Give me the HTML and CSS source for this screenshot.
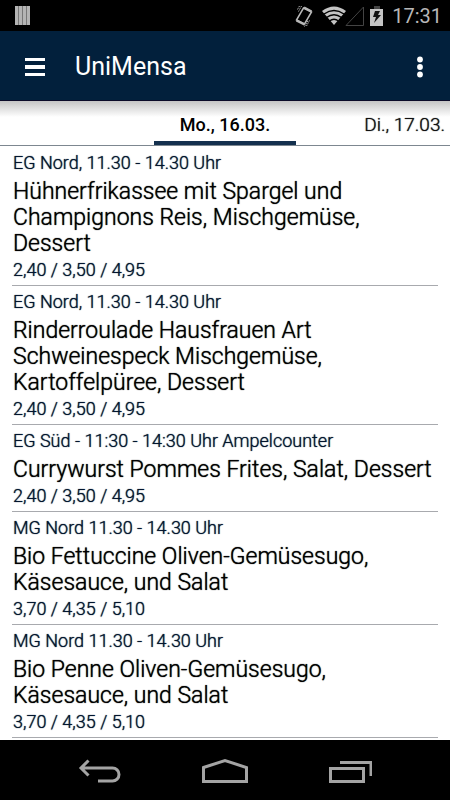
FILE: index.html
```html
<!DOCTYPE html>
<html lang="de">
<head>
<meta charset="utf-8">
<meta name="viewport" content="width=device-width, initial-scale=1">
<title>UniMensa</title>
<link rel="stylesheet" href="styles.css">
</head>
<body>
<div class="status-bar">
  <svg class="status-notification" width="15" height="19" viewBox="0 0 15 19" aria-hidden="true"><path fill="#b4b4b4" d="M0 0h15v19H0z"/><path stroke="#777" d="M3.500 0v19M7.500 0v19M11.500 0v19"/></svg>
  <div class="status-icons">
    <svg width="18" height="22" viewBox="0 0 18 22" fill="none" stroke="#b8b8b8" aria-hidden="true"><path stroke-width="1.500" d="M8.500 3L16.500 7 9.500 19 1.500 15z"/><path stroke-width="2.500" d="M1.500 15.500l8 4M9 2.500l7.500 4"/><path stroke-dasharray="1.500 1" d="M6.500 1L3.500 6.500M4.500 1L2.500 4.500M11.500 21L14.500 15.500M9.500 21.500l3.500-6"/></svg>
    <svg class="wifi" width="24" height="20" viewBox="0 0 24 20" aria-hidden="true"><path fill="#c4c4c4" d="M0 5Q12-4 24 5L12 19z"/><path fill="none" stroke="#000" stroke-width="1.500" d="M2 8Q12 1 22 8M4.500 11.500Q12 6 19.500 11.500M7.500 15Q12 11.500 16.500 15"/></svg>
    <svg class="signal" width="19" height="20" viewBox="0 0 19 20" aria-hidden="true"><path fill="none" stroke="#444" d="M1 19.500L18.500 1v18.500z"/></svg>
    <svg class="battery" width="14" height="20" viewBox="0 0 14 20" aria-hidden="true"><path fill="#444" d="M4 0h6v3H4z"/><path fill="#c4c4c4" d="M0 3h13v17H0z"/><path fill="#111" d="M5 5h5L8 9h3L4 17l2-6H3z"/></svg>
    <time class="clock">17:31</time>
  </div>
</div>
<header class="app-bar">
  <button class="icon-button" type="button" aria-label="Menü"><svg width="20" height="20" viewBox="0 0 20 20"><path fill="#fff" d="M0 1h20v3H0zM0 8h20v4H0zM0 16h20v3H0z"/></svg></button>
  <h1>UniMensa</h1>
  <button class="icon-button" type="button" aria-label="Weitere Optionen"><svg width="6" height="22" viewBox="0 0 6 22" fill="#fff"><circle cx="3" cy="3.500" r="2.900"/><circle cx="3" cy="11" r="2.900"/><circle cx="3" cy="18.500" r="2.900"/></svg></button>
</header>
<nav class="tabs" aria-label="Tage">
  <a class="tab tab-current" href="#mo" aria-current="page">Mo., 16.03.</a>
  <a class="tab tab-next" href="#di">Di., 17.03.</a>
</nav>
<main class="meals" id="mo">
  <article class="meal"><p class="detail">EG Nord, 11.30 - 14.30 Uhr</p><h2>Hühnerfrikassee mit Spargel und Champignons Reis, Mischgemüse, Dessert</h2><p class="detail">2,40 / 3,50 / 4,95</p></article>
  <article class="meal"><p class="detail">EG Nord, 11.30 - 14.30 Uhr</p><h2>Rinderroulade Hausfrauen Art Schweinespeck Mischgemüse, Kartoffelpüree, Dessert</h2><p class="detail">2,40 / 3,50 / 4,95</p></article>
  <article class="meal"><p class="detail">EG Süd - 11:30 - 14:30 Uhr Ampelcounter</p><h2>Currywurst Pommes Frites, Salat, Dessert</h2><p class="detail">2,40 / 3,50 / 4,95</p></article>
  <article class="meal"><p class="detail">MG Nord 11.30 - 14.30 Uhr</p><h2>Bio Fettuccine Oliven-Gemüsesugo, Käsesauce, und Salat</h2><p class="detail">3,70 / 4,35 / 5,10</p></article>
  <article class="meal"><p class="detail">MG Nord 11.30 - 14.30 Uhr</p><h2>Bio Penne Oliven-Gemüsesugo, Käsesauce, und Salat</h2><p class="detail">3,70 / 4,35 / 5,10</p></article>
</main>
<footer class="nav-bar">
  <button type="button" aria-label="Zurück"><svg width="44" height="26" viewBox="0 0 44 26" fill="none" stroke="#a4a4a4" stroke-width="3"><path d="M3 11h31.500a6.500 6.500 0 0 1 0 13H20M10.500 3.500L3 11l7.500 7.500"/></svg></button>
  <button type="button" aria-label="Startseite"><svg width="46" height="26" viewBox="0 0 46 26" fill="none" stroke="#a4a4a4" stroke-width="3"><path d="M1.500 10.500L23 3.500l21.500 7v14h-43z"/></svg></button>
  <button type="button" aria-label="Letzte Apps"><svg width="44" height="26" viewBox="0 0 44 26" fill="none" stroke="#a4a4a4" stroke-width="3"><path d="M2.500 11.500h33v13h-33zM12 5.500h31V19"/></svg></button>
</footer>
</body>
</html>
```
FILE: styles.css
```css
* { box-sizing: border-box; }
body {
  margin: 0;
  height: 100vh;
  display: flex;
  flex-direction: column;
  overflow: hidden;
  background: #fff;
  color: #000;
  font-family: Roboto, sans-serif;
}
h1, h2, p { margin: 0; font-weight: 400; }
button { border: 0; padding: 0; background: none; display: flex; align-items: center; justify-content: center; }
svg { display: block; flex: none; }
.status-bar {
  flex: none;
  height: 31px;
  padding: 0 8px 0 15px;
  display: flex;
  align-items: center;
  justify-content: space-between;
  background: #000;
}
.status-icons { display: flex; align-items: center; }
.wifi { margin-left: 9px; }
.signal { margin-left: -1px; }
.battery { margin-left: 6px; }
.clock { margin-left: 8px; color: #b8b8b8; font-size: 20px; line-height: 32px; }
.app-bar {
  flex: none;
  height: 70px;
  padding: 2px 10px 0 15px;
  display: flex;
  align-items: center;
  background: #02203c;
  color: #fff;
  border-bottom: 1px solid #0a0a28;
}
.icon-button { width: 40px; height: 48px; }
.app-bar h1 { flex: 1; margin-left: 20px; font-size: 25px; line-height: 32px; }
.tabs {
  flex: none;
  height: 45px;
  display: grid;
  grid-template-columns: 1fr 142px 1fr;
  background: linear-gradient(#c4c4c4, #fff 16px);
  border-bottom: 1px solid #7d8790;
}
.tab {
  padding-top: 4px;
  color: #111;
  font-size: 19px;
  font-weight: 300;
  line-height: 40px;
  text-decoration: none;
  white-space: nowrap;
}
.tab-current {
  grid-column: 2;
  color: #000;
  font-size: 18px;
  font-weight: 500;
  text-align: center;
  background: linear-gradient(#14304e, #14304e) bottom / 100% 4px no-repeat;
}
.tab-next { text-align: right; padding-right: 5px; }
.meals { flex: 1; min-height: 0; overflow: hidden; padding: 1px 12px 0; }
.meal { padding: 6px 0 5px; border-bottom: 1px solid #a8aaae; }
.detail, .meal h2, .tab-next { font-weight: 300; text-shadow: 0 0 1px currentColor; }
.detail { padding-left: 1px; color: #02152e; font-size: 18px; line-height: 20px; }
.meal h2 { margin: 6px 0 3px; padding-left: 1px; font-size: 23px; line-height: 26px; }
.nav-bar {
  flex: none;
  height: 60px;
  padding: 0 37px;
  display: grid;
  grid-template-columns: repeat(3, 1fr);
  background: #000;
}
```
